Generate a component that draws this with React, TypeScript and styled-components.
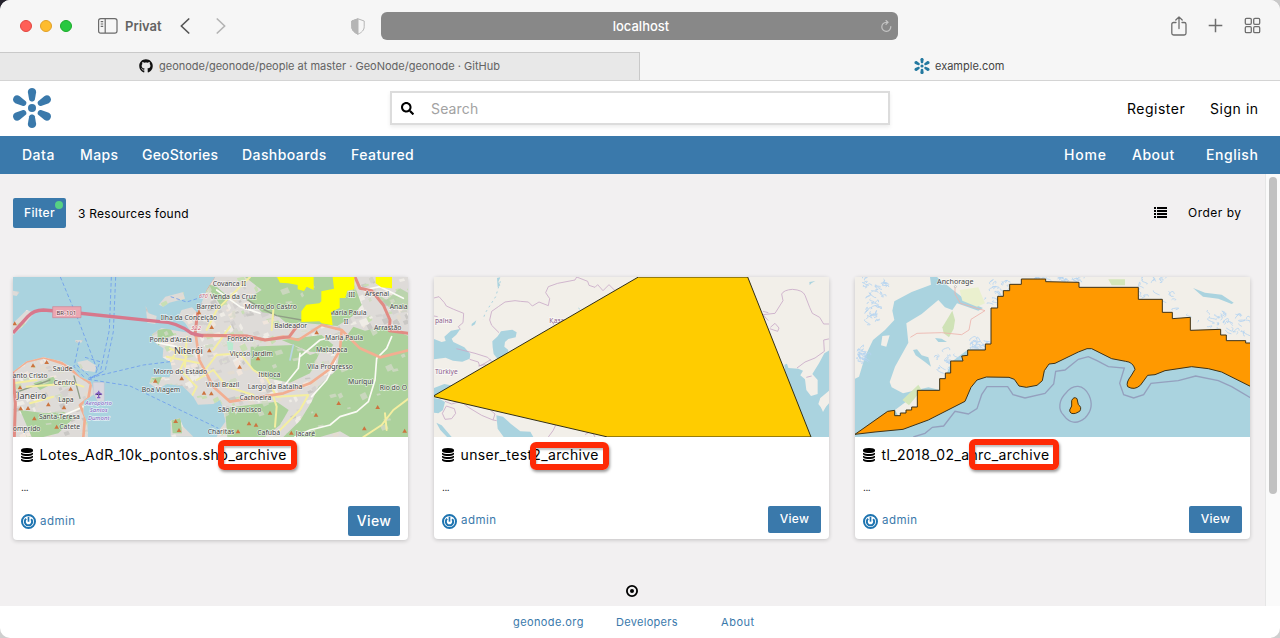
import React from 'react';
import styled, { createGlobalStyle } from 'styled-components';
import { FaGithub, FaSearch } from 'react-icons/fa';

const Global = createGlobalStyle`
  * { box-sizing: border-box; }
  html, body { margin: 0; padding: 0; }
  body { background: linear-gradient(90deg, #25232d 0 40px, #c9c9c9 40px) top / 100% 300px no-repeat, #cfcfcf; overflow: hidden; }
`;

const blue = '#3a79ab';
const brand = "Inter, 'Open Sans', sans-serif";

const Window = styled.div`
  width: 1280px;
  height: 638px;
  border-radius: 10px;
  overflow: hidden;
  background: #fff;
  display: flex;
  flex-direction: column;
  font-family: ${brand};
  color: #000;
`;

const Label = styled.span<{ $w?: number; $track?: number }>`
  display: inline-block;
  flex: none;
  white-space: nowrap;
  width: ${p => (p.$w ? `${p.$w}px` : 'auto')};
  letter-spacing: ${p => p.$track ?? 0}px;
`;

/* Browser chrome */
const Toolbar = styled.div`
  height: 52px;
  flex: none;
  background: #f6f6f6;
  display: flex;
  align-items: center;
  padding: 0 19px 0 20px;
  color: #636363;
`;
const Lights = styled.div`
  display: flex;
  gap: 8px;
  margin-right: 26px;
`;
const Light = styled.i<{ $fill: string; $edge: string }>`
  width: 12px;
  height: 12px;
  border-radius: 50%;
  background: ${p => p.$fill};
  border: 1px solid ${p => p.$edge};
`;
const Privat = styled(Label)`
  font-size: 13px;
  font-weight: 600;
  margin: 0 18px 0 7px;
`;
const Arrows = styled.div`
  display: flex;
  gap: 26px;
  margin-right: 125px;
  padding-bottom: 1px;
`;
const Address = styled.div`
  width: 517px;
  height: 28px;
  margin-left: 16px;
  border-radius: 6px;
  background: #888;
  color: #fff;
  display: grid;
  grid-template-columns: 20px 1fr 20px;
  align-items: center;
  justify-items: center;
  font-size: 13px;
  font-weight: 500;
  padding: 0 2px 0 5px;
`;
const ToolIcons = styled.div`
  margin-left: auto;
  display: flex;
  align-items: center;
  gap: 21px;
  padding-bottom: 1px;
`;
const Tabs = styled.div`
  height: 29px;
  flex: none;
  display: grid;
  grid-template-columns: 640px 640px;
  border-bottom: 1px solid #d4d4d4;
  font-size: 11px;
`;
const Tab = styled.div<{ $active?: boolean }>`
  display: flex;
  align-items: center;
  justify-content: center;
  gap: ${p => (p.$active ? 5 : 6)}px;
  padding-bottom: 1px;
  background: ${p => (p.$active ? '#f6f6f6' : '#e8e8e8')};
  color: ${p => (p.$active ? '#444' : '#636363')};
  border-top: 1px solid ${p => (p.$active ? '#f6f6f6' : '#c9c9c9')};
  border-right: 1px solid ${p => (p.$active ? '#f6f6f6' : '#c9c9c9')};
  svg { color: #111; }
`;

/* Site header */
const Header = styled.header`
  height: 55px;
  flex: none;
  display: grid;
  grid-template-columns: 378px 500px 1fr;
  padding: 0 22px 1px 12px;
  align-items: center;
  font-size: 14px;
`;
const SearchBox = styled.div`
  height: 34px;
  border: 2px solid #dcdcdc;
  box-shadow: 0 2px 4px rgba(0, 0, 0, 0.08);
  display: flex;
  align-items: center;
  gap: 17px;
  padding-left: 9px;
  color: #a2a2a2;
  svg { color: #000; }
`;
const Account = styled.div`
  display: flex;
  justify-content: flex-end;
  gap: 24px;
`;
const Nav = styled.nav`
  height: 38px;
  flex: none;
  background: ${blue};
  color: #fff;
  display: flex;
  align-items: center;
  justify-content: space-between;
  padding: 0 22px 2px;
  font-size: 14px;
  font-weight: 500;
`;
const NavGroup = styled.div`
  display: flex;
  gap: 24px;
`;

/* Resource area */
const Main = styled.main`
  height: 432px;
  flex: none;
  display: grid;
  grid-template-columns: 1fr 15px;
  background: #f2f0f1;
`;
const Content = styled.div`
  display: flex;
  flex-direction: column;
  padding: 24px 14px 0 13px;
`;
const ScrollTrack = styled.div`
  background: #fafafa;
  border-left: 1px solid #e6e6e6;
  padding: 3px 3px 0;
`;
const ScrollThumb = styled.div`
  width: 8px;
  height: 317px;
  border-radius: 4px;
  background: #c1c1c1;
`;
const Filters = styled.div`
  height: 30px;
  display: flex;
  align-items: center;
  font-size: 12px;
`;
const Button = styled.button<{ $w: number; $h: number; $size: number }>`
  position: relative;
  width: ${p => p.$w}px;
  height: ${p => p.$h}px;
  padding: 0 0 2px;
  border: 0;
  border-radius: 2px;
  background: ${blue};
  color: #fff;
  font-family: inherit;
  font-size: ${p => p.$size}px;
  font-weight: 500;
  letter-spacing: 0.3px;
`;
const Dot = styled.i`
  position: absolute;
  top: 3px;
  right: 3px;
  width: 8px;
  height: 8px;
  border-radius: 50%;
  background: #57d183;
`;
const Found = styled(Label)`
  margin-left: 12px;
`;
const Sorting = styled.div`
  margin-left: auto;
  margin-right: 10px;
  display: flex;
  align-items: center;
  gap: 21px;
  padding-bottom: 2px;
`;
const Cards = styled.div`
  display: grid;
  grid-template-columns: repeat(3, 395px);
  gap: 26px;
  align-items: start;
  margin-top: 49px;
`;
const Card = styled.article`
  position: relative;
  background: #fff;
  border-radius: 4px;
  box-shadow: 0 1px 4px rgba(0, 0, 0, 0.2);
  > svg { display: block; }
`;
const Title = styled.div`
  height: 36px;
  display: flex;
  align-items: center;
  gap: 6.5px;
  padding: 0 8px;
  font-size: 14px;
  span { margin-top: -2px; }
`;
const Summary = styled.div`
  height: 33px;
  padding: 8px 8px 0;
  font-size: 10px;
  letter-spacing: -0.5px;
`;
const CardFoot = styled.div<{ $pad: number }>`
  display: flex;
  align-items: flex-start;
  justify-content: space-between;
  padding: 0 8px ${p => p.$pad}px;
`;
const Owner = styled.div<{ $drop: number }>`
  display: flex;
  align-items: center;
  gap: 4px;
  padding-top: 8px;
  color: ${blue};
  font-size: 11.5px;
  line-height: 15px;
  span { margin-top: ${p => p.$drop}px; }
`;
const Mark = styled.i<{ $x: number; $y: number; $w: number; $h: number }>`
  position: absolute;
  left: ${p => p.$x}px;
  top: ${p => p.$y}px;
  width: ${p => p.$w}px;
  height: ${p => p.$h}px;
  border: 6px solid #fe2a06;
  border-radius: 6px;
  box-shadow: 1px 2px 3px rgba(0, 0, 0, 0.4), inset 1px 2px 2px rgba(0, 0, 0, 0.25);
`;
const Pager = styled.div`
  display: flex;
  justify-content: center;
  margin-top: 45px;
`;
const Footer = styled.footer`
  flex: 1;
  display: flex;
  justify-content: center;
  align-items: center;
  padding: 0 12px 0 0;
  color: ${blue};
  font-size: 11px;
`;
const FootLink = styled(Label)<{ $after?: number }>`
  margin-right: ${p => p.$after ?? 0}px;
`;

const Logo = ({ size, color }: { size: number; color: string }) => (
  <svg width={size} height={size} viewBox="-60 -60 120 120" fill={color}>
    <circle r="12" />
    {[0, 60, 120, 180, 240, 300].map(a => (
      <path key={a} transform={`rotate(${a}) scale(1 ${a % 180 ? 1.06 : 1})`} d="M-12.500 -48C-12.500 -64 12.500 -64 12.500 -48L8.500 -25C6 -18 -6 -18 -8.500 -25Z" />
    ))}
  </svg>
);

const cylinder = 'q237 0 443-43t325-127v170q0 69-103 128t-280 93.5-385 34.5-385-34.5-280-93.5-103-128v-170q119 84 325 127t443 43z';
const DatabaseIcon = () => (
  <svg width="12" height="14" viewBox="0 0 1536 1792">
    <path d={`M768 768${cylinder}M768 1152${cylinder}M768 1536${cylinder}M768 0q208 0 385 34.5t280 93.5 103 128v128q0 69-103 128t-280 93.5-385 34.5-385-34.5-280-93.5-103-128v-128q0-69 103-128t280-93.5 385-34.5z`} />
  </svg>
);

const AvatarIcon = () => (
  <svg width="15" height="15" viewBox="0 0 45 45" fill="none" stroke="#1e74b0">
    <circle cx="22.5" cy="22.5" r="19.5" strokeWidth="6" />
    <path d="M15.5 14.5A11 11 0 1 0 30.5 15.5" strokeWidth="6" />
    <path d="M22.5 8V23" strokeWidth="5" />
  </svg>
);

type Place = [string, number, number, number?];
const Places = ({ items, fill = '#444', italic }: { items: Place[]; fill?: string; italic?: boolean }) => (
  <g fontFamily="'Noto Sans', sans-serif" textAnchor="middle" fill={fill} stroke="#fff" strokeOpacity=".65" strokeWidth="4" paintOrder="stroke" fontStyle={italic ? 'italic' : undefined}>
    {items.map(([t, x, y, s]) => (
      <text key={t + y} x={x} y={y} fontSize={s ?? 20.5}>{t}</text>
    ))}
  </g>
);

const noise = (i: number, k: number) => {
  const v = Math.sin(i * 127.1 + k * 311.7) * 43758.5453;
  return v - Math.floor(v);
};
const parcels = Array.from({ length: 900 }, (_, i) => {
  const x = 39 + noise(i, 1) * 1188;
  const y = 21 + noise(i, 2) * 480;
  const a = 5 + noise(i, 3) * 18;
  const b = 4 + noise(i, 4) * 14;
  return { d: `M${x} ${y}l${a} ${-b / 2} ${b / 2} ${b}l${-a} ${b / 2}z`, c: ['#c9c7c4', '#efece6', '#e3dcd1', '#d4d1cf', '#c8dfb4', '#f0e5dc'][i % 6] };
});

const peaks: [number, number][] = [
  [635, 171], [950, 187], [774, 265], [628, 241], [719, 290], [1016, 399], [1133, 411], [810, 428], [948, 434], [747, 460], [768, 464], [714, 484], [874, 488], [1093, 475], [1214, 482],
  [634, 370], [545, 325], [466, 332], [612, 368], [527, 453], [537, 480], [60, 352], [62, 415], [84, 414], [145, 403], [103, 445], [212, 356], [192, 412], [170, 470], [140, 276], [99, 286], [597, 127], [44, 160],
];

const CoastMap = () => (
  <svg width="395" height="160" viewBox="39 21 1185 480" preserveAspectRatio="none">
    <defs>
      <clipPath id="land">
        <path d="M645 21L620 60L607 92L592 128L576 112L545 120L535 140L556 160L575 190L530 182L484 174L455 194L470 222L490 235L488 262L512 276L516 300L508 322L455 320L448 340L472 358L502 342L548 348L580 380L594 404L640 402L660 390L669 415L676 455L660 478L650 501H1227V21Z" />
        <path d="M39 305L80 274L130 262L185 274L216 293L240 320L272 335L284 372L252 392L250 430L262 460L264 501H39Z" />
        <path d="M39 160L80 120L103 128L74 164L39 196ZM437 108L446 130L470 138L466 162L442 158ZM476 104L496 80L550 66L554 86L508 98L490 110ZM232 276L262 270L290 288L284 306L244 300ZM512 452L540 444L548 468L580 500H512ZM39 62L58 66L50 78L39 76ZM226 210L248 211L244 218L228 217Z" />
      </clipPath>
    </defs>
    <path fill="#aad3df" d="M39 21h1188v480H39z" />
    <g clipPath="url(#land)">
      <path fill="#dedbd8" d="M39 21h1188v480H39z" />
      <g>{parcels.map((p, i) => <path key={i} d={p.d} fill={p.c} />)}</g>
      <g fill="#acd19d">
        <path d="M735 21H1050L1065 50L1085 105L1055 140L1012 168L920 160L860 160L830 135L786 126L740 88L785 60Z" />
        <path d="M1060 170L1095 182L1150 170L1227 198V501H1050L1020 484L960 501H850L900 452L935 395L955 350L1010 300L1022 222Z" />
        <path d="M690 412L830 395L866 420L840 465L795 501H682L676 430Z" />
        <path d="M752 230L880 225L930 255L960 245L930 310L870 338L790 322L752 290ZM845 210L965 195L1000 225L980 248L930 245L880 225Z" />
        <path d="M472 180L510 174L522 195L488 208L474 230ZM455 325L486 320L475 345ZM514 450L542 444L546 490H518ZM60 420L135 430L190 425L225 440L175 490L130 501H95ZM100 340L160 320L170 335L120 360ZM615 40L650 50L690 85L665 110Z" />
        <path d="M1120 65L1160 90L1200 55L1227 70V120L1170 115Z" opacity=".7" />
      </g>
      <g fill="#d5d8ca" opacity=".75">{parcels.filter((_, i) => i % 7 === 0).map((p, i) => <path key={i} d={p.d} />)}</g>
      <path d="M680 210L700 220L698 244L684 240Z" fill="#b9ead0" />
      <g fill="none" strokeLinejoin="round" strokeLinecap="round">
        <path stroke="#8f9f86" strokeWidth="4" d="M740 88L790 118L830 137L905 150M150 330L40 370M222 318L240 385" />
        <path stroke="#f4eea0" strokeWidth="6" d="M615 300L650 255L720 250L760 300L800 325L830 380L925 375L900 420L835 485M620 180L650 120L700 70L750 21M690 170L640 240M510 235L560 260L540 300L590 350L570 390M590 330L640 300L680 350L760 375M1227 385L1180 420L1145 465L1090 501M825 470L830 410L820 380M500 260L600 280M560 200L555 290M80 350L220 340L250 350M40 340L110 330M90 400L160 380M540 230L500 290M820 120L815 180M1155 430L1160 480" />
        <path stroke="#fbfbf5" strokeWidth="5" d="M900 260L960 210L1010 198M850 350L895 295L900 250M1175 200L1160 235L1130 265L1125 330L1105 395L1070 425L1020 440L990 465L930 480L885 501M935 380L980 330L1000 290L1015 240M650 60L720 110L780 130M1090 60L1140 50L1210 85M180 440L250 410M430 210L530 230" />
        <path stroke="#b9d5e5" strokeWidth="5" d="M880 225L870 270" />
        <path stroke="#f2ae91" strokeWidth="8" d="M588 200L598 270L640 350L690 395L850 370L930 340L985 300L1020 240L1025 180L965 165L895 210L850 200L795 210L740 198L588 197M1025 180L1080 235L1140 262L1227 240M39 305L80 274L130 262L186 280L245 322L273 340L265 385L240 405L255 440L250 501" />
        <path stroke="#e18b83" strokeWidth="9" d="M640 21L600 85L590 150L585 195L740 198L795 210L868 200L890 170M1065 21L1080 55L1115 62L1150 105L1170 150L1168 182L1227 190M39 310L46 400L43 501" />
      </g>
    </g>
    <path fill="#d9d7df" stroke="#bdb8ce" d="M279 337H313V394H292L280 370Z" />
    <g fill="none" stroke="#6c9ced" strokeWidth="2.5" strokeDasharray="11 7">
      <path d="M181 21L235 150L292 300M334 21L328 180L300 310L265 325M347 21L340 185L316 300L268 328M510 275L430 285L270 323M265 328L390 348L655 475M238 215L222 290L255 324M512 80L560 96L610 80M255 262L300 275L282 324M230 285L275 324" />
    </g>
    <path fill="none" stroke="#d7788c" strokeWidth="10" strokeLinejoin="round" d="M39 189L83 140Q101 120 130 120L205 126L480 155Q530 156 575 190L610 198" />
    <path fill="#eba7b2" stroke="#cd8494" strokeWidth="2" d="M158 110H243V143H158Z" />
    <Places items={[['BR-101', 199, 134, 18]]} fill="#5d343c" />
    <g fill="#cc743f">{peaks.map(([x, y]) => <path key={`${x}-${y}`} d={`M${x} ${y - 6}l7 12h-14z`} />)}</g>
    <path d="M296 362v22M286 374l10-7 10 7M291 383h10" stroke="#8461c4" strokeWidth="4" />
    <Places items={[['Aeroporto', 296, 405, 18], ['Santos', 296, 427, 18], ['Dumont', 296, 449, 18]]} fill="#8461c4" italic />
    <Places items={[
      ['Saúde', 188, 302], ['anto Cristo', 90, 323], ['Centro', 193, 344], ['Janeiro', 95, 388, 27], ['Lapa', 198, 396], ['Santa-Teresa', 178, 446], ['Catete', 209, 477], ['omprido', 80, 483],
      ['Ilha da Conceição', 567, 151], ["Ponta d'Areia", 512, 215], ['Niterói', 565, 252, 27], ['Morro do Estado', 541, 313], ['Boa Viagem', 483, 366], ['Vital Brazil', 668, 350],
      ['Covanca II', 688, 48], ['Venda da Cruz', 699, 86], ['Barreto', 626, 116], ['Morro do Castro', 812, 118], ['Baldeador', 872, 175], ['Fonseca', 721, 212], ['Viçoso Jardim', 754, 257],
      ['Ititioca', 808, 321], ['Largo da Batalha', 825, 357], ['Cachoeira', 766, 389], ['São Francisco', 719, 425], ['Charitas', 663, 491], ['Cafubá', 806, 495], ['Jacaré', 916, 497],
      ['o III', 1046, 82], ['Arsenal', 1131, 77], ['Anaia', 1196, 118], ['Maria Paula', 1043, 136], ['II', 1038, 162], ['Arrastão', 1163, 181], ['Maria Paula', 1032, 209], ['Matapaca', 995, 247],
      ['Vila Progresso', 990, 296], ['Muriqui', 1082, 341], ['Rio do O', 1180, 359],
    ]} />
    <Places items={[['322', 588, 180, 18], ['670', 610, 84, 16]]} fill="#d05f72" italic />
    <path fill="yellow" d="M831 21H941V60L920 50L912 63L893 58V45L865 40L840 38ZM998 21H1063V58L1042 62L1036 84H1019V114L993 126L998 166L965 160L958 154L904 156V124L919 104L958 100L964 94V64L1002 56ZM1127 21H1176V55L1144 52L1127 40Z" />
  </svg>
);

const ContinentMap = () => (
  <svg width="395" height="160" viewBox="27 21 1185 480" preserveAspectRatio="none">
    <path fill="#f2efe9" d="M27 21h1188v480H27z" />
    <g fill="#aad3df">
      <path d="M27 207L50 216L62 213L58 200L78 182L106 177L94 194L80 206L85 216L118 232L136 252L134 266L112 275L84 272L62 263L27 268Z" />
      <path d="M202 214L218 199L228 184L262 179L275 187L272 202L250 207L240 216L238 230L250 240L248 255L222 272L206 252L203 232Z" />
      <path d="M27 354L58 342L78 346L100 338L86 352L56 372L27 378ZM27 384L46 388L60 396L54 420L40 430L27 428ZM34 458L50 466L80 501H66L46 480Z" />
      <path d="M214 436L234 440L258 462L286 484L316 485L325 501H236L218 476Z" />
      <path d="M1078 284L1086 281L1090 294L1120 296L1134 302L1126 316L1140 328L1144 360L1158 378L1178 372L1178 330L1162 312L1182 280L1198 250L1215 240V360L1186 384L1180 402L1194 420L1215 396V501H1158L1084 330Z" />
      <path d="M1153 36l18-3-12 7-5 6zM216 24l10-2-6 14 6 10-8 6zM140 162l14-11-4 12-10 6z" />
    </g>
    <path d="M1186 386L1202 384L1208 400L1194 426L1188 412Z" fill="#f2efe9" />
    <g fill="none" stroke="#c9aac8" strokeWidth="2.5">
      <path d="M27 84L42 80L58 98L64 108L86 118L116 130L114 158L100 170L106 178M27 138L38 140M200 166L194 150L200 124L220 110L240 96L270 92L286 94L310 96L322 108L342 96L370 107L374 86L362 68L370 50L398 40L450 30L455 21L488 34L492 46L510 52L518 44L534 62L552 44L570 62L588 52M200 166L222 188M94 236L150 250L188 262L202 276M134 268L160 276L164 288L186 276L198 268M160 288L178 284L196 290M60 394L80 402L108 394L130 412L170 436L204 450L210 432L196 420M60 448L80 446L92 430L88 416L64 408L52 430L60 448M204 450L215 452M370 501L384 482L392 466L374 458M480 494L500 482L510 501" />
      <path d="M1070 72Q1076 60 1102 58Q1134 60 1140 76L1154 112L1162 130L1184 142L1196 162H1215M1070 72L1074 92L1050 130L1014 134L1030 152M1014 124L1030 128M1036 172L1050 160L1062 174L1058 184L1034 176M1215 206L1196 210L1198 244L1170 264L1140 276L1116 294M1144 322L1160 318" />
    </g>
    <g fill="none" stroke="#aad3df" strokeWidth="3" strokeDasharray="6 10"><path d="M226 34L212 80L180 130L174 150M460 114l10 8M1160 476L1190 430" /></g>
    <Places items={[['раїна', 56, 160, 20], ['Türkiye', 64, 313, 20], ['Қазақстан', 422, 159, 20]]} fill="#8b5c8b" />
    <path d="M640 21L27 377V380L548 501H1158L968 21Z" fill="#fc0" stroke="#332f14" strokeWidth="3" />
  </svg>
);

const AlaskaMap = () => (
  <svg width="395" height="160" viewBox="30 21 1185 480" preserveAspectRatio="none">
    <path fill="#aad3df" d="M30 21h1188v480H30z" />
    <path fill="#f2efe9" d="M30 21H255L258 44L200 66L148 94L142 122L148 150L120 180L84 210L60 260L42 320L30 326Z" />
    <path fill="#f2efe9" d="M276 21H1218V230H440V238H370L320 275L284 360L250 352L200 364L174 370L140 352L134 336L150 290L190 218L184 160L230 132L280 90L300 112L322 120L336 100L400 122L414 114L370 96L324 60Z" />
    <path fill="#f2efe9" d="M150 420L190 390L216 360H270L216 412L160 438ZM112 198L134 196L124 230L108 226Z" />
    <path fill="#cfe2b6" d="M292 172L322 122L330 150L326 176L312 202L296 190Z" />
    <path fill="#eaf0ce" d="M344 60L400 52L420 100L396 110L352 92Z" />
    <path fill="#d3e6ba" d="M172 390L220 344L230 360L192 406ZM790 28H840V46H800Z" />
    <g fill="#aad3df"><path d="M204 240L216 238L230 256L250 262L258 290L240 276L212 256ZM270 204L290 206L306 216H280ZM1044 54L1080 68L1130 74L1166 98L1160 102L1120 86L1074 80Z" /></g>
    <g fill="none" stroke="#b4d4f0" strokeWidth="2.5">
      {Array.from({ length: 220 }, (_, i) => {
        const zones = [[38, 24, 90, 60], [55, 85, 45, 65], [420, 30, 70, 75], [370, 210, 55, 30], [270, 245, 60, 110], [950, 120, 250, 75], [560, 20, 150, 12], [860, 25, 120, 85], [35, 235, 25, 45], [1080, 130, 130, 80]];
        const [zx, zy, zw, zh] = zones[i % zones.length];
        const x = zx + noise(i, 7) * zw;
        const y = zy + noise(i, 8) * zh;
        const dir = noise(i, 12) > 0.5 ? 1 : -1;
        return <path key={i} d={`M${x} ${y}q${noise(i, 9) * 20 - 10} ${dir * 4} ${noise(i, 5) * 10} ${dir * noise(i, 6) * 12}t${noise(i, 11) * 22 - 8} 5`} />;
      })}
    </g>
    <path d="M330 52V72L346 100L420 122L378 148L372 180L350 194L290 188L216 190L196 202" fill="none" stroke="#edb3ac" strokeWidth="2.5" />
    <path d="M205 501L240 490L262 472L296 468L330 424L370 432L396 416L410 374L426 350H488L504 374L540 384L600 370L626 342L632 304L660 300L700 268L730 260L756 272L790 290L838 294L824 340L836 374L866 384L896 374L918 340L1000 332L1052 318L1120 332L1160 350L1218 384" fill="none" stroke="#94a0be" strokeWidth="4" />
    <path d="M662 370C684 340 716 342 732 376C746 406 738 426 720 444C696 464 674 460 656 436C638 418 642 390 662 370Z" fill="none" stroke="#94a0be" strokeWidth="4" />
    <path d="M30 493L128 424L149 421V437H166V429H183V420H200V411H217V361H284V326H301V309H317V273H354L350 258L368 256V240H421V222H438V114H458V79H475V62H494V43H529V27H602V35L702 37V52H880V88H952V127H982V146L1036 142V181L1127 178V195H1144V212H1202V219H1218V350L1130 306L1090 296L1040 290L960 302L930 314L908 316L886 346Q868 362 848 350Q842 338 858 318L870 298Q864 276 842 274L800 266L740 236H726L700 246L630 280L612 282L598 302L592 332L576 346L544 352L522 348L508 328L492 322L424 321L396 330L378 352L360 394L250 450L174 478L90 486Z" fill="#f90" stroke="#3e3217" strokeWidth="3" />
    <path d="M680 392Q686 378 696 386L700 404Q712 412 704 424L692 430Q674 434 674 420L680 408Z" fill="#f90" stroke="#3e3217" strokeWidth="3" />
    <circle cx="331" cy="50" r="3" fill="#fff" stroke="#777" />
    <Places items={[['Anchorage', 331, 41, 21.500]]} />
  </svg>
);

interface Resource {
  map: React.ReactNode;
  name: string;
  width: number;
  track: number;
  mark: [number, number, number, number];
  large?: boolean;
}

const resources: Resource[] = [
  { map: <CoastMap />, name: 'Lotes_AdR_10k_pontos.shp_archive', width: 248, track: 0.47, mark: [205, 163, 79, 30], large: true },
  { map: <ContinentMap />, name: 'unser_test2_archive', width: 139, track: 0.35, mark: [96, 165, 79, 28] },
  { map: <AlaskaMap />, name: 'tl_2018_02_anrc_archive', width: 168, track: 0.37, mark: [114, 162, 90, 31] },
];

export default function App() {
  return (
    <>
      <Global />
      <Window>
        <Toolbar>
          <Lights>
            <Light $fill="#ff5f57" $edge="#e2463f" />
            <Light $fill="#febc2e" $edge="#e0a028" />
            <Light $fill="#28c840" $edge="#1aab29" />
          </Lights>
          <svg width="20" height="16" viewBox="0 0 20 16" fill="none" stroke="#6b6b6b" strokeWidth="1.2">
            <rect x=".6" y=".6" width="18.4" height="14.6" rx="2.2" />
            <path d="M7.2 1v14M2.7 3.7h2.5M2.7 6h2.5M2.7 8.3h2.5" />
          </svg>
          <Privat $w={37}>Privat</Privat>
          <Arrows>
            <svg width="10" height="16" viewBox="0 0 10 16" fill="none" stroke="#555" strokeWidth="1.7" strokeLinecap="round" strokeLinejoin="round"><path d="M8.7 1L1.3 8l7.4 7" /></svg>
            <svg width="10" height="16" viewBox="0 0 10 16" fill="none" stroke="#b4b4b4" strokeWidth="1.7" strokeLinecap="round" strokeLinejoin="round"><path d="M1.3 1l7.4 7-7.4 7" /></svg>
          </Arrows>
          <svg width="14" height="17" viewBox="0 0 14 17" fill="none" stroke="#b5b5b5">
            <path d="M7 .8L13.2 3v5.7c0 3.4-2.5 5.8-6.2 7.5C3.3 14.5.8 12.1.8 8.7V3z" />
            <path d="M7 .8V16.2C3.3 14.5.8 12.1.8 8.7V3z" fill="#b5b5b5" />
          </svg>
          <Address>
            <span />
            <Label>localhost</Label>
            <svg width="11" height="12" viewBox="0 0 11 12" fill="none" stroke="#c4c4c4" strokeWidth="1.2" strokeLinecap="round"><path d="M9.8 6.500A4.500 4.500 0 1 1 5.300 2.300H6.800M5 .4L7 2.300 5 4.300" /></svg>
          </Address>
          <ToolIcons>
            <svg width="16" height="20" viewBox="0 0 16 20" fill="none" stroke="#6e6e6e" strokeWidth="1.3" strokeLinecap="round" strokeLinejoin="round"><path d="M5 6.500H2.600Q.8 6.500.8 8.300V17.200Q.8 19 2.600 19H13.200Q15 19 15 17.200V8.300Q15 6.500 13.200 6.500H11M8 12.500V1M4.800 4L8 .9 11.200 4" /></svg>
            <svg width="15" height="15" viewBox="0 0 15 15" stroke="#6e6e6e" strokeWidth="1.5"><path d="M.7 7.500h13.600M7.500.7v13.600" /></svg>
            <svg width="17" height="17" viewBox="0 0 17 17" fill="none" stroke="#6e6e6e" strokeWidth="1.3">
              {[[1.3, 1.3], [9.7, 1.3], [1.3, 9.7], [9.7, 9.7]].map(([x, y]) => <rect key={`${x}${y}`} x={x} y={y} width="6" height="6" rx="1.2" />)}
            </svg>
          </ToolIcons>
        </Toolbar>
        <Tabs>
          <Tab>
            <FaGithub size={14} />
            <Label $w={341} $track={0}>geonode/geonode/people at master · GeoNode/geonode · GitHub</Label>
          </Tab>
          <Tab $active>
            <Logo size={16} color="#2379a0" />
            <Label $w={70}>example.com</Label>
          </Tab>
        </Tabs>

        <Header>
          <Logo size={40} color={blue} />
          <SearchBox>
            <FaSearch size={13} />
            <Label $track={0.15}>Search</Label>
          </SearchBox>
          <Account>
            <Label $w={59} $track={0.5}>Register</Label>
            <Label $w={48} $track={0.55}>Sign in</Label>
          </Account>
        </Header>

        <Nav>
          <NavGroup>
            <Label $w={34} $track={0.5}>Data</Label>
            <Label $w={38} $track={0.4}>Maps</Label>
            <Label $w={76} $track={0.2}>GeoStories</Label>
            <Label $w={85} $track={0.42}>Dashboards</Label>
            <Label $w={64} $track={0.5}>Featured</Label>
          </NavGroup>
          <NavGroup>
            <Label $w={44} $track={0.8}>Home</Label>
            <Label $w={50} $track={0.5}>About</Label>
            <Label $w={52} $track={0.55}>English</Label>
          </NavGroup>
        </Nav>

        <Main>
          <Content>
            <Filters>
              <Button $w={53} $h={30} $size={12}>Filter<Dot /></Button>
              <Found $w={112} $track={0.25}>3 Resources found</Found>
              <Sorting>
                <svg width="13" height="11" viewBox="0 0 13 11">
                  {[0, 3, 6, 9].map(y => <path key={y} d={`M0 ${y}h2v2h-2zM3 ${y}h10v2h-10z`} />)}
                </svg>
                <Label $w={53} $track={0.5}>Order by</Label>
              </Sorting>
            </Filters>
            <Cards>
              {resources.map(r => (
                <Card key={r.name}>
                  {r.map}
                  <Title>
                    <DatabaseIcon />
                    <Label $w={r.width} $track={r.track}>{r.name}</Label>
                  </Title>
                  <Summary>...</Summary>
                  <CardFoot $pad={r.large ? 4 : 6}>
                    <Owner $drop={r.large ? 0 : -2}>
                      <AvatarIcon />
                      <Label $track={0.5}>admin</Label>
                    </Owner>
                    <Button $w={r.large ? 52 : 53} $h={r.large ? 30 : 27} $size={r.large ? 14 : 12}>View</Button>
                  </CardFoot>
                  <Mark $x={r.mark[0]} $y={r.mark[1]} $w={r.mark[2]} $h={r.mark[3]} />
                </Card>
              ))}
            </Cards>
            <Pager>
              <svg width="12" height="12" viewBox="0 0 12 12"><circle cx="6" cy="6" r="5.1" fill="none" stroke="#000" strokeWidth="1.8" /><circle cx="6" cy="6" r="2" /></svg>
            </Pager>
          </Content>
          <ScrollTrack><ScrollThumb /></ScrollTrack>
        </Main>

        <Footer>
          <FootLink $w={71} $track={0.4} $after={32}>geonode.org</FootLink>
          <FootLink $w={62} $track={0.3} $after={43}>Developers</FootLink>
          <FootLink $w={34} $track={0.55}>About</FootLink>
        </Footer>
      </Window>
    </>
  );
}
